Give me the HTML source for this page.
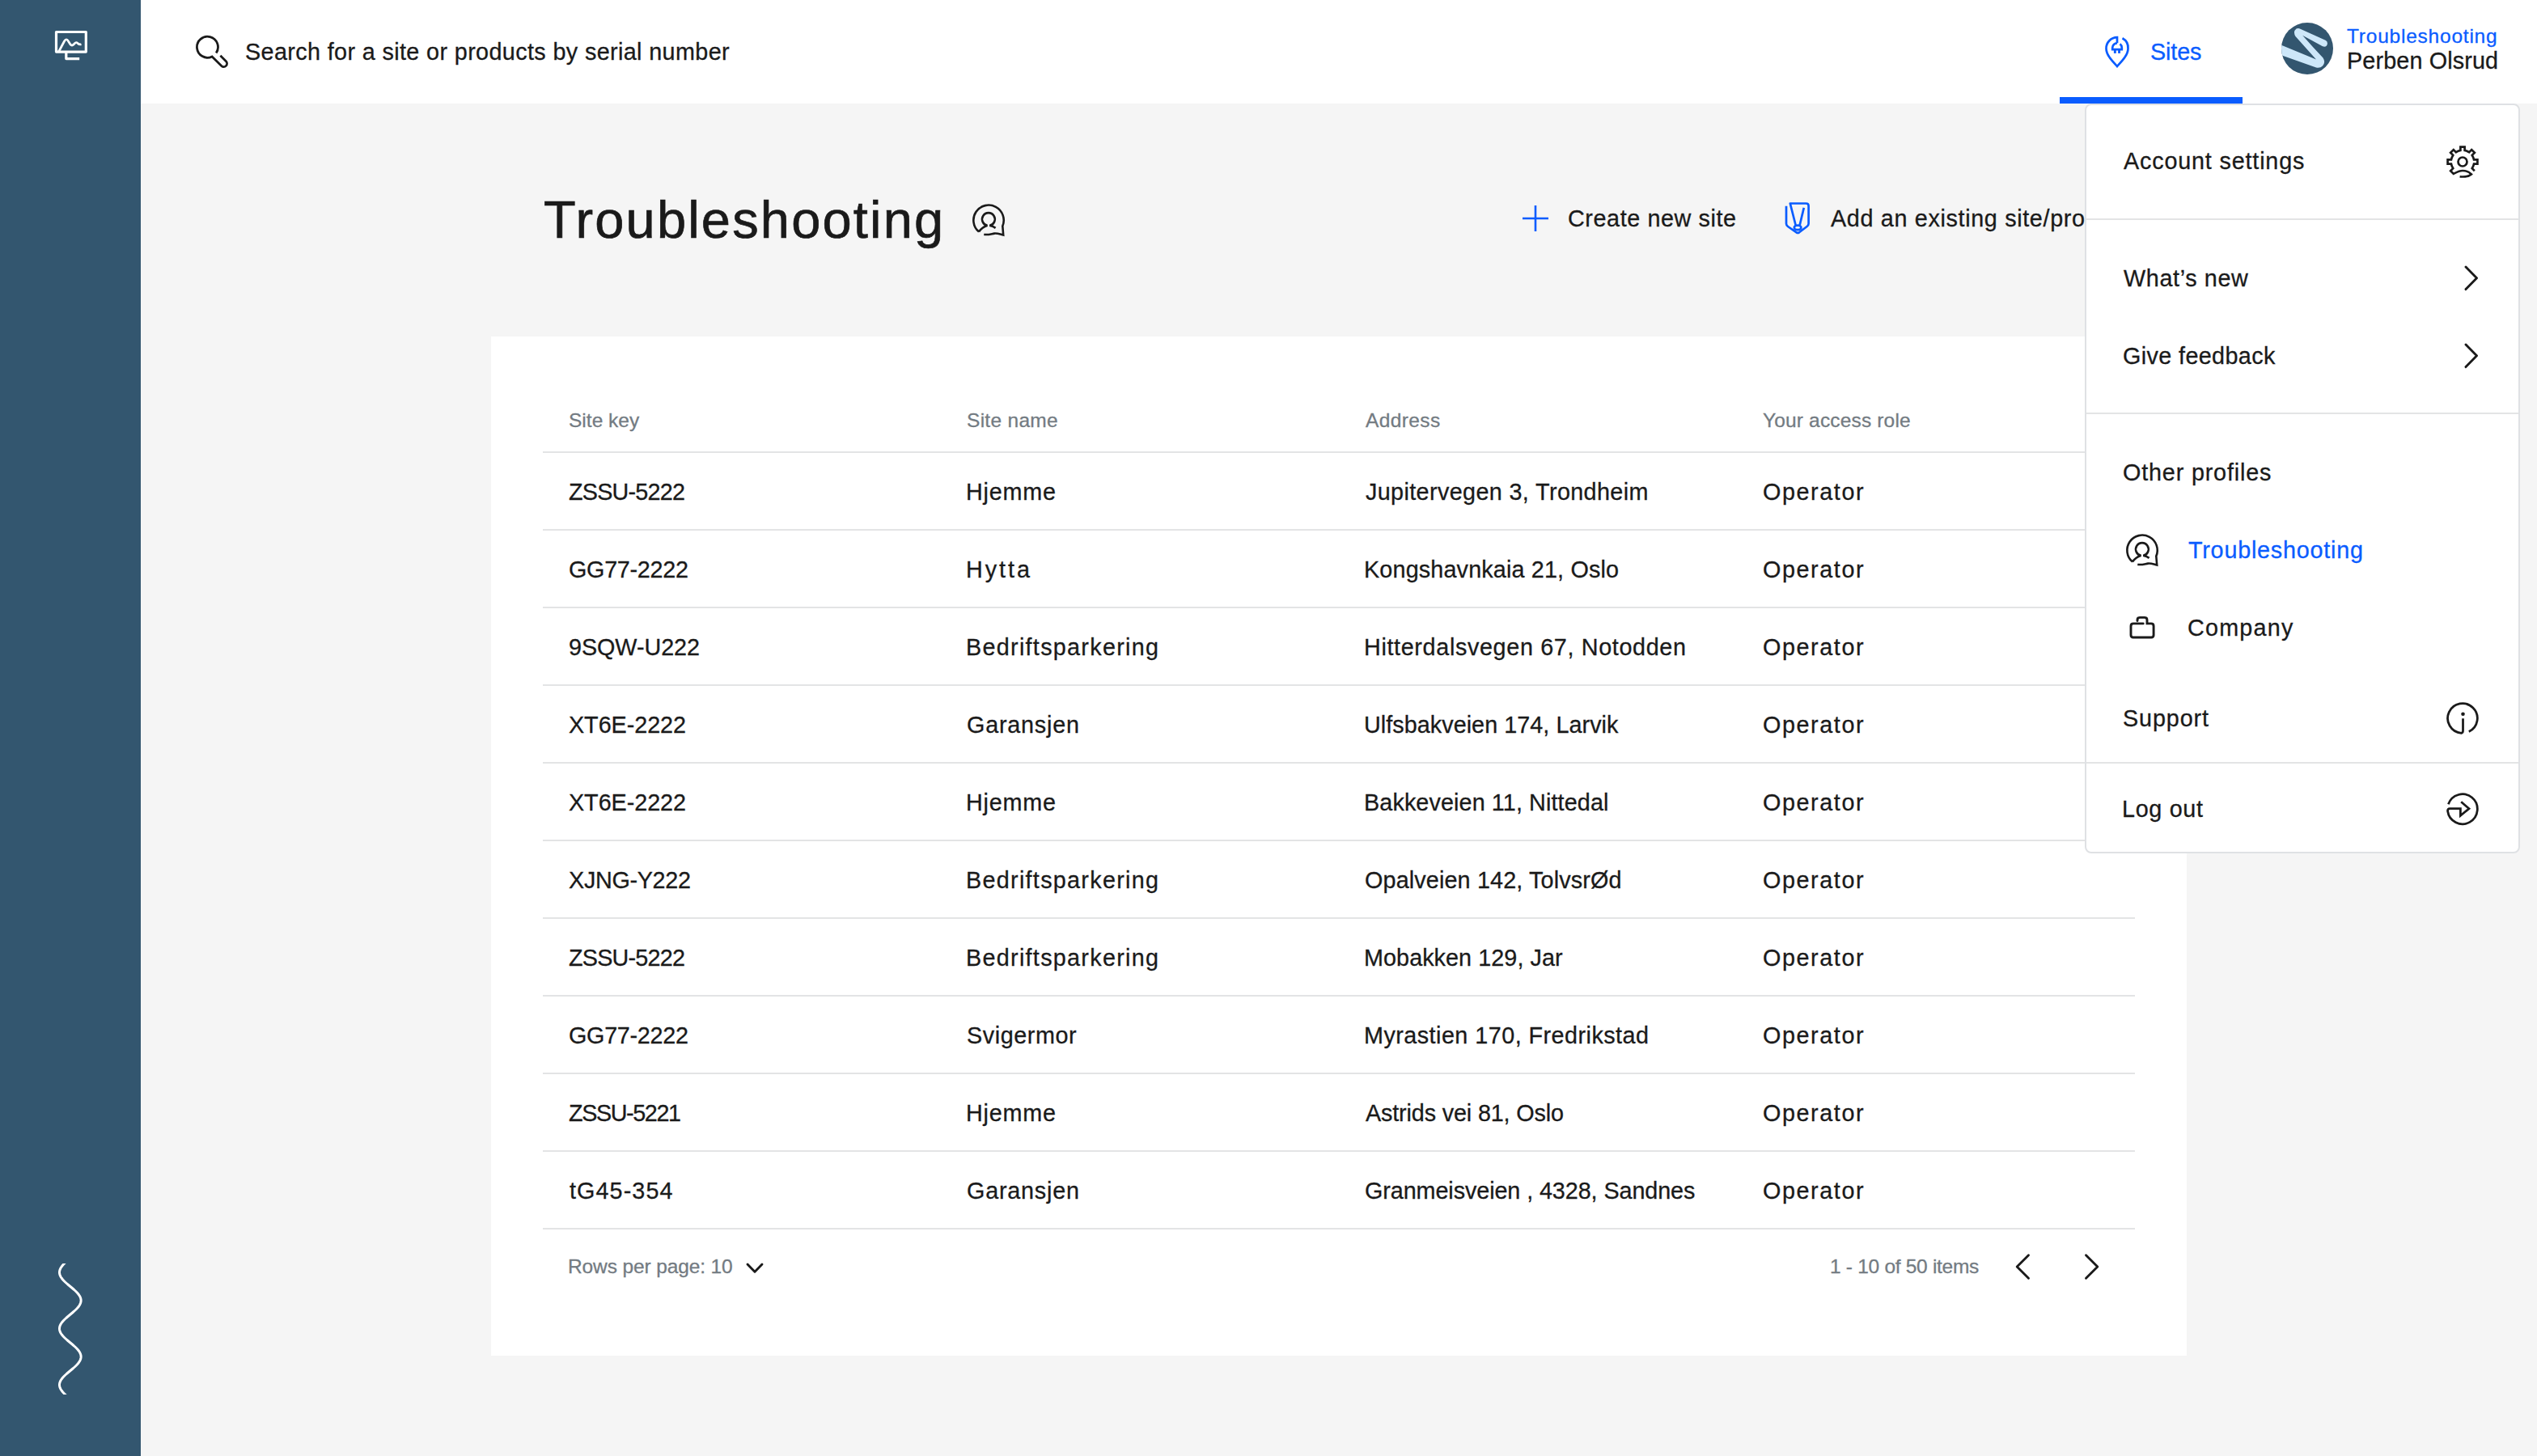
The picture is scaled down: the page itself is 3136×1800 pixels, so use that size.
<!DOCTYPE html>
<html><head><meta charset="utf-8"><title>Troubleshooting</title>
<style>
html,body{margin:0;padding:0}
body{width:3136px;height:1800px;overflow:hidden;background:#f5f5f5;position:relative;font-family:"Liberation Sans",sans-serif}
.t{position:absolute;white-space:pre;line-height:1;font-family:"Liberation Sans",sans-serif;-webkit-text-stroke:0.3px currentColor}
.i{position:absolute;overflow:visible}
#side{position:absolute;left:0;top:0;width:174px;height:1800px;background:#33566f}
#hdr{position:absolute;left:174px;top:0;width:2962px;height:128px;background:#fff}
#tab{position:absolute;left:2546px;top:120px;width:226px;height:8px;background:#0a5cff}
#card{position:absolute;left:607px;top:416px;width:2096px;height:1260px;background:#fff}
.ln{position:absolute;left:671px;width:1968px;height:2px;background:#e3e4e5}
#dd{position:absolute;left:2577px;top:128px;width:534px;height:923px;background:#fff;border:2px solid #dfe1e4;border-radius:8px;z-index:5}
#ddl{position:absolute;left:0;top:0;z-index:6}
.dsep{position:absolute;left:2579px;width:534px;height:2px;background:#e3e4e5}
@media (max-width:2000px){html{zoom:0.5}}
</style></head><body>
<div id="side"></div>
<div id="hdr"></div>
<div id="tab"></div>
<div id="card"></div>
<div class="ln" style="top:558px"></div><div class="ln" style="top:654px"></div><div class="ln" style="top:750px"></div><div class="ln" style="top:846px"></div><div class="ln" style="top:942px"></div><div class="ln" style="top:1038px"></div><div class="ln" style="top:1134px"></div><div class="ln" style="top:1230px"></div><div class="ln" style="top:1326px"></div><div class="ln" style="top:1422px"></div><div class="ln" style="top:1518px"></div>
<div class="t" id="t0" style="left:303.00px;top:49.86px;font-size:28.75px;letter-spacing:0.376px;color:#1a1a1a">Search for a site or products by serial number</div>
<div class="t" id="t1" style="left:2658.00px;top:49.66px;font-size:28.75px;letter-spacing:-0.135px;color:#0a5cff">Sites</div>
<div class="t" id="t2" style="left:2901.00px;top:33.26px;font-size:24.50px;letter-spacing:0.774px;color:#0a5cff">Troubleshooting</div>
<div class="t" id="t3" style="left:2901.00px;top:60.66px;font-size:28.75px;letter-spacing:0.135px;color:#1a1a1a">Perben Olsrud</div>
<div class="t" id="t4" style="left:672.00px;top:238.98px;font-size:65.00px;letter-spacing:2.173px;color:#1a1a1a;-webkit-text-stroke:0.7px currentColor">Troubleshooting</div>
<div class="t" id="t5" style="left:1938.00px;top:255.66px;font-size:28.75px;letter-spacing:0.589px;color:#1a1a1a">Create new site</div>
<div class="t" id="t6" style="left:2263.00px;top:255.66px;font-size:28.75px;letter-spacing:0.660px;color:#1a1a1a">Add an existing site/product</div>
<div class="t" id="t7" style="left:703.00px;top:508.26px;font-size:24.50px;letter-spacing:0.014px;color:#737b82">Site key</div>
<div class="t" id="t8" style="left:1195.00px;top:508.26px;font-size:24.50px;letter-spacing:0.289px;color:#737b82">Site name</div>
<div class="t" id="t9" style="left:1688.00px;top:508.26px;font-size:24.50px;letter-spacing:0.395px;color:#737b82">Address</div>
<div class="t" id="t10" style="left:2179.00px;top:508.26px;font-size:24.50px;letter-spacing:0.160px;color:#737b82">Your access role</div>
<div class="t" id="t11" style="left:703.00px;top:593.66px;font-size:28.75px;letter-spacing:-0.777px;color:#1a1a1a">ZSSU-5222</div>
<div class="t" id="t12" style="left:1194.00px;top:593.66px;font-size:28.75px;letter-spacing:0.793px;color:#1a1a1a">Hjemme</div>
<div class="t" id="t13" style="left:1688.00px;top:593.66px;font-size:28.75px;letter-spacing:0.376px;color:#1a1a1a">Jupitervegen 3, Trondheim</div>
<div class="t" id="t14" style="left:2179.00px;top:593.66px;font-size:28.75px;letter-spacing:1.588px;color:#1a1a1a">Operator</div>
<div class="t" id="t15" style="left:703.00px;top:689.66px;font-size:28.75px;letter-spacing:-0.281px;color:#1a1a1a">GG77-2222</div>
<div class="t" id="t16" style="left:1194.00px;top:689.66px;font-size:28.75px;letter-spacing:2.972px;color:#1a1a1a">Hytta</div>
<div class="t" id="t17" style="left:1686.00px;top:689.66px;font-size:28.75px;letter-spacing:0.159px;color:#1a1a1a">Kongshavnkaia 21, Oslo</div>
<div class="t" id="t18" style="left:2179.00px;top:689.66px;font-size:28.75px;letter-spacing:1.588px;color:#1a1a1a">Operator</div>
<div class="t" id="t19" style="left:703.00px;top:785.66px;font-size:28.75px;letter-spacing:-0.057px;color:#1a1a1a">9SQW-U222</div>
<div class="t" id="t20" style="left:1194.00px;top:785.66px;font-size:28.75px;letter-spacing:1.292px;color:#1a1a1a">Bedriftsparkering</div>
<div class="t" id="t21" style="left:1686.00px;top:785.66px;font-size:28.75px;letter-spacing:0.652px;color:#1a1a1a">Hitterdalsvegen 67, Notodden</div>
<div class="t" id="t22" style="left:2179.00px;top:785.66px;font-size:28.75px;letter-spacing:1.588px;color:#1a1a1a">Operator</div>
<div class="t" id="t23" style="left:703.00px;top:881.66px;font-size:28.75px;letter-spacing:-0.056px;color:#1a1a1a">XT6E-2222</div>
<div class="t" id="t24" style="left:1195.00px;top:881.66px;font-size:28.75px;letter-spacing:0.793px;color:#1a1a1a">Garansjen</div>
<div class="t" id="t25" style="left:1686.00px;top:881.66px;font-size:28.75px;letter-spacing:0.050px;color:#1a1a1a">Ulfsbakveien 174, Larvik</div>
<div class="t" id="t26" style="left:2179.00px;top:881.66px;font-size:28.75px;letter-spacing:1.588px;color:#1a1a1a">Operator</div>
<div class="t" id="t27" style="left:703.00px;top:977.66px;font-size:28.75px;letter-spacing:-0.056px;color:#1a1a1a">XT6E-2222</div>
<div class="t" id="t28" style="left:1194.00px;top:977.66px;font-size:28.75px;letter-spacing:0.793px;color:#1a1a1a">Hjemme</div>
<div class="t" id="t29" style="left:1686.00px;top:977.66px;font-size:28.75px;letter-spacing:0.112px;color:#1a1a1a">Bakkeveien 11, Nittedal</div>
<div class="t" id="t30" style="left:2179.00px;top:977.66px;font-size:28.75px;letter-spacing:1.588px;color:#1a1a1a">Operator</div>
<div class="t" id="t31" style="left:703.00px;top:1073.66px;font-size:28.75px;letter-spacing:-0.301px;color:#1a1a1a">XJNG-Y222</div>
<div class="t" id="t32" style="left:1194.00px;top:1073.66px;font-size:28.75px;letter-spacing:1.292px;color:#1a1a1a">Bedriftsparkering</div>
<div class="t" id="t33" style="left:1687.00px;top:1073.66px;font-size:28.75px;letter-spacing:0.144px;color:#1a1a1a">Opalveien 142, TolvsrØd</div>
<div class="t" id="t34" style="left:2179.00px;top:1073.66px;font-size:28.75px;letter-spacing:1.588px;color:#1a1a1a">Operator</div>
<div class="t" id="t35" style="left:703.00px;top:1169.66px;font-size:28.75px;letter-spacing:-0.777px;color:#1a1a1a">ZSSU-5222</div>
<div class="t" id="t36" style="left:1194.00px;top:1169.66px;font-size:28.75px;letter-spacing:1.292px;color:#1a1a1a">Bedriftsparkering</div>
<div class="t" id="t37" style="left:1686.00px;top:1169.66px;font-size:28.75px;letter-spacing:0.066px;color:#1a1a1a">Mobakken 129, Jar</div>
<div class="t" id="t38" style="left:2179.00px;top:1169.66px;font-size:28.75px;letter-spacing:1.588px;color:#1a1a1a">Operator</div>
<div class="t" id="t39" style="left:703.00px;top:1265.66px;font-size:28.75px;letter-spacing:-0.281px;color:#1a1a1a">GG77-2222</div>
<div class="t" id="t40" style="left:1195.00px;top:1265.66px;font-size:28.75px;letter-spacing:0.571px;color:#1a1a1a">Svigermor</div>
<div class="t" id="t41" style="left:1686.00px;top:1265.66px;font-size:28.75px;letter-spacing:0.466px;color:#1a1a1a">Myrastien 170, Fredrikstad</div>
<div class="t" id="t42" style="left:2179.00px;top:1265.66px;font-size:28.75px;letter-spacing:1.588px;color:#1a1a1a">Operator</div>
<div class="t" id="t43" style="left:703.00px;top:1361.66px;font-size:28.75px;letter-spacing:-1.402px;color:#1a1a1a">ZSSU-5221</div>
<div class="t" id="t44" style="left:1194.00px;top:1361.66px;font-size:28.75px;letter-spacing:0.793px;color:#1a1a1a">Hjemme</div>
<div class="t" id="t45" style="left:1688.00px;top:1361.66px;font-size:28.75px;letter-spacing:-0.141px;color:#1a1a1a">Astrids vei 81, Oslo</div>
<div class="t" id="t46" style="left:2179.00px;top:1361.66px;font-size:28.75px;letter-spacing:1.588px;color:#1a1a1a">Operator</div>
<div class="t" id="t47" style="left:704.00px;top:1457.66px;font-size:28.75px;letter-spacing:1.088px;color:#1a1a1a">tG45-354</div>
<div class="t" id="t48" style="left:1195.00px;top:1457.66px;font-size:28.75px;letter-spacing:0.793px;color:#1a1a1a">Garansjen</div>
<div class="t" id="t49" style="left:1687.00px;top:1457.66px;font-size:28.75px;letter-spacing:-0.084px;color:#1a1a1a">Granmeisveien , 4328, Sandnes</div>
<div class="t" id="t50" style="left:2179.00px;top:1457.66px;font-size:28.75px;letter-spacing:1.588px;color:#1a1a1a">Operator</div>
<div class="t" id="t51" style="left:702.00px;top:1553.76px;font-size:24.50px;letter-spacing:-0.127px;color:#737b82">Rows per page: 10</div>
<div class="t" id="t52" style="left:2262.00px;top:1553.76px;font-size:24.50px;letter-spacing:-0.296px;color:#737b82">1 - 10 of 50 items</div>
<svg class="i" style="left:60px;top:30px" width="56" height="52" viewBox="60 30 56 52"><g fill="none" stroke="#fff" stroke-width="3.2" stroke-linejoin="round"><path d="M69.5 64.1 V39.5 H106.3 V64.1 Z"/><path stroke-width="2.7" d="M72.5 64 L79.5 51 Q82 46.5 84.5 51 L87 55 Q89 57 91 55 L92.5 53.5 Q94 51.5 96 53.5 Q98 55.5 100.5 54.8"/><path d="M81.8 64.1 V72.6 H98.2"/></g></svg>
<svg class="i" style="left:60px;top:1550px" width="50" height="190" viewBox="60 1550 50 190"><defs><clipPath id="wc"><rect x="60" y="1562" width="50" height="162"/></clipPath></defs><path clip-path="url(#wc)" d="M87.55 1555.00 L86.35 1556.00 L85.15 1557.00 L83.97 1558.00 L82.80 1559.00 L81.68 1560.00 L80.59 1561.00 L79.55 1562.00 L78.57 1563.00 L77.66 1564.00 L76.83 1565.00 L76.08 1566.00 L75.41 1567.00 L74.84 1568.00 L74.36 1569.00 L73.99 1570.00 L73.72 1571.00 L73.55 1572.00 L73.50 1573.00 L73.55 1574.00 L73.72 1575.00 L73.99 1576.00 L74.36 1577.00 L74.84 1578.00 L75.41 1579.00 L76.08 1580.00 L76.83 1581.00 L77.66 1582.00 L78.57 1583.00 L79.55 1584.00 L80.59 1585.00 L81.68 1586.00 L82.80 1587.00 L83.97 1588.00 L85.15 1589.00 L86.35 1590.00 L87.55 1591.00 L88.75 1592.00 L89.93 1593.00 L91.08 1594.00 L92.20 1595.00 L93.28 1596.00 L94.30 1597.00 L95.26 1598.00 L96.15 1599.00 L96.97 1600.00 L97.70 1601.00 L98.34 1602.00 L98.89 1603.00 L99.34 1604.00 L99.69 1605.00 L99.93 1606.00 L100.07 1607.00 L100.10 1608.00 L100.02 1609.00 L99.83 1610.00 L99.53 1611.00 L99.13 1612.00 L98.63 1613.00 L98.03 1614.00 L97.34 1615.00 L96.57 1616.00 L95.71 1617.00 L94.79 1618.00 L93.79 1619.00 L92.74 1620.00 L91.65 1621.00 L90.51 1622.00 L89.34 1623.00 L88.15 1624.00 L86.95 1625.00 L85.75 1626.00 L84.56 1627.00 L83.38 1628.00 L82.24 1629.00 L81.13 1630.00 L80.06 1631.00 L79.06 1632.00 L78.11 1633.00 L77.24 1634.00 L76.44 1635.00 L75.73 1636.00 L75.11 1637.00 L74.59 1638.00 L74.16 1639.00 L73.84 1640.00 L73.62 1641.00 L73.51 1642.00 L73.51 1643.00 L73.62 1644.00 L73.84 1645.00 L74.16 1646.00 L74.59 1647.00 L75.11 1648.00 L75.73 1649.00 L76.44 1650.00 L77.24 1651.00 L78.11 1652.00 L79.06 1653.00 L80.06 1654.00 L81.13 1655.00 L82.24 1656.00 L83.38 1657.00 L84.56 1658.00 L85.75 1659.00 L86.95 1660.00 L88.15 1661.00 L89.34 1662.00 L90.51 1663.00 L91.65 1664.00 L92.74 1665.00 L93.79 1666.00 L94.79 1667.00 L95.71 1668.00 L96.57 1669.00 L97.34 1670.00 L98.03 1671.00 L98.63 1672.00 L99.13 1673.00 L99.53 1674.00 L99.83 1675.00 L100.02 1676.00 L100.10 1677.00 L100.07 1678.00 L99.93 1679.00 L99.69 1680.00 L99.34 1681.00 L98.89 1682.00 L98.34 1683.00 L97.70 1684.00 L96.97 1685.00 L96.15 1686.00 L95.26 1687.00 L94.30 1688.00 L93.28 1689.00 L92.20 1690.00 L91.08 1691.00 L89.93 1692.00 L88.75 1693.00 L87.55 1694.00 L86.35 1695.00 L85.15 1696.00 L83.97 1697.00 L82.80 1698.00 L81.68 1699.00 L80.59 1700.00 L79.55 1701.00 L78.57 1702.00 L77.66 1703.00 L76.83 1704.00 L76.08 1705.00 L75.41 1706.00 L74.84 1707.00 L74.36 1708.00 L73.99 1709.00 L73.72 1710.00 L73.55 1711.00 L73.50 1712.00 L73.55 1713.00 L73.72 1714.00 L73.99 1715.00 L74.36 1716.00 L74.84 1717.00 L75.41 1718.00 L76.08 1719.00 L76.83 1720.00 L77.66 1721.00 L78.57 1722.00 L79.55 1723.00 L80.59 1724.00 L81.68 1725.00 L82.80 1726.00 L83.97 1727.00 L85.15 1728.00 L86.35 1729.00 L87.55 1730.00 L88.75 1731.00" fill="none" stroke="#fff" stroke-width="3"/></svg>
<svg class="i" style="left:236px;top:38px" width="52" height="52" viewBox="236 38 52 52"><g transform="translate(242 44)"><path d="M25.2 21.5 A13 13 0 1 0 20.1 25.9 L31.8 37.4 A3.9 3.9 0 0 0 37.4 31.8 L30.4 24.7" fill="none" stroke="#1a1a1a" stroke-width="2.75"/></g></svg>
<svg class="i" style="left:2594px;top:38px" width="46" height="52" viewBox="2594 38 46 52"><g transform="translate(2594 38)"><g fill="none" stroke="#0a5cff" stroke-width="2.7"><path d="M29.5 9.3 A13.6 13.6 0 0 1 36.5 22 C36.5 30 29 37.5 23 44 C17 37.5 9.5 30 9.5 22 A13.6 13.6 0 0 1 23 8.2 V15.3"/><path d="M23 15.3 A5.8 5.8 0 0 0 17.2 21 V23.2 H28.8 V21 A5.8 5.8 0 0 0 26.5 16.3"/></g><rect x="18.9" y="23" width="2.9" height="4.9" fill="#0a5cff"/><rect x="24.1" y="23" width="2.9" height="4.9" fill="#0a5cff"/></g></svg>
<svg class="i" style="left:2816px;top:24px" width="72" height="72" viewBox="2816 24 72 72"><defs><clipPath id="avc"><circle cx="2852" cy="60" r="32"/></clipPath></defs><circle cx="2852" cy="60" r="32" fill="#33566f"/><g clip-path="url(#avc)"><g transform="translate(2816 24)"><path d="M-2 29.2 L47 49.5 L21.5 21 Q18 15 22.5 11.5 Q25 10.5 28 12 L58.5 25.8 Q62.5 28 60 32.5 Q58 34.5 55 33.3 L30.2 19.8 L43.6 34.65 L55.5 47.5 Q59 53 55 57.5 Q52 60.5 47 59.5 L-2 42 Z" fill="#cde7f9"/></g></g></svg>
<svg class="i" style="left:1196px;top:244px" width="52" height="54" viewBox="1196 244 52 54"><g transform="translate(1196 244)"><g fill="none" stroke="#1a1a1a" stroke-width="2.6"><path d="M14 42.6 A18.7 18.7 0 1 1 43.3 35.5 L44.2 46.5 C40 45.5 36.5 44.2 33.2 44.6 C29 45.3 24.5 46.8 20.3 45.8"/><path d="M14 42.6 C16.5 39 20 36.2 24.5 34.8 A7.9 7.9 0 1 1 27.3 34.8 C30 35.5 32.5 36.3 34.6 37.9"/></g></g></svg>
<svg class="i" style="left:1878px;top:250px" width="40" height="40" viewBox="1878 250 40 40"><path d="M1898 254 V286 M1882 270 H1914" stroke="#0a5cff" stroke-width="2.6" fill="none"/></svg>
<svg class="i" style="left:2198px;top:244px" width="48" height="52" viewBox="2198 244 48 52"><g transform="translate(2198 244)"><g fill="none" stroke="#0a5cff" stroke-width="2.7" stroke-linejoin="round"><path d="M10 10.7 V32.6 Q10 34.6 12 36 L22.6 43.3 Q24.3 44.5 26 43.3 L35.6 36 Q37.6 34.6 37.6 32.6 V10.5 Q37.6 7.5 34.6 7.5 H14.8 L21.8 35"/><path d="M31.8 12.9 L26.5 35"/><ellipse cx="24.1" cy="37.4" rx="4.3" ry="2.7"/></g></g></svg>
<svg class="i" style="left:918px;top:1556px" width="30" height="24" viewBox="918 1556 30 24"><path d="M924 1563 L933 1572.2 L942 1563" fill="none" stroke="#1a1a1a" stroke-width="2.9" stroke-linecap="round" stroke-linejoin="round"/></svg>
<svg class="i" style="left:2486px;top:1546px" width="30" height="40" viewBox="2486 1546 30 40"><path d="M2507.5 1551.8 L2493.2 1566 L2507.5 1580.2" fill="none" stroke="#1a1a1a" stroke-width="2.9" stroke-linecap="round" stroke-linejoin="round"/></svg>
<svg class="i" style="left:2572px;top:1546px" width="30" height="40" viewBox="2572 1546 30 40"><path d="M2578.5 1551.8 L2592.8 1566 L2578.5 1580.2" fill="none" stroke="#1a1a1a" stroke-width="2.9" stroke-linecap="round" stroke-linejoin="round"/></svg>
<div id="dd"></div>
<div id="ddl">
<div class="dsep" style="top:270px"></div>
<div class="dsep" style="top:510px"></div>
<div class="dsep" style="top:942px"></div>
<div class="t" id="t53" style="left:2625.00px;top:185.16px;font-size:28.75px;letter-spacing:0.828px;color:#1a1a1a">Account settings</div>
<div class="t" id="t54" style="left:2625.00px;top:329.66px;font-size:28.75px;letter-spacing:0.632px;color:#1a1a1a">What’s new</div>
<div class="t" id="t55" style="left:2624.00px;top:425.66px;font-size:28.75px;letter-spacing:0.382px;color:#1a1a1a">Give feedback</div>
<div class="t" id="t56" style="left:2624.00px;top:570.16px;font-size:28.75px;letter-spacing:0.831px;color:#1a1a1a">Other profiles</div>
<div class="t" id="t57" style="left:2624.00px;top:874.26px;font-size:28.75px;letter-spacing:0.882px;color:#1a1a1a">Support</div>
<div class="t" id="t58" style="left:2623.00px;top:986.26px;font-size:28.75px;letter-spacing:0.678px;color:#1a1a1a">Log out</div>
<div class="t" id="t59" style="left:2705.00px;top:665.96px;font-size:28.75px;letter-spacing:0.777px;color:#0a5cff">Troubleshooting</div>
<div class="t" id="t60" style="left:2704.00px;top:762.06px;font-size:28.75px;letter-spacing:1.222px;color:#1a1a1a">Company</div>
<svg class="i" style="left:3016px;top:172px" width="52" height="54" viewBox="3016 172 52 54"><g transform="translate(3016 172)"><g fill="none" stroke="#1a1a1a" stroke-width="2.7" stroke-linejoin="miter"><path d="M42.86 39.18 L39.78 36.10 A14.30 14.30 0 0 0 42.06 30.60 L46.42 30.60 L46.42 25.40 L42.06 25.40 A14.30 14.30 0 0 0 39.78 19.90 L42.86 16.82 L39.18 13.14 L36.10 16.22 A14.30 14.30 0 0 0 30.60 13.94 L30.60 9.58 L25.40 9.58 L25.40 13.94 A14.30 14.30 0 0 0 19.90 16.22 L16.82 13.14 L13.14 16.82 L16.22 19.90 A14.30 14.30 0 0 0 13.94 25.40 L9.58 25.40 L9.58 30.60 L13.94 30.60 A14.30 14.30 0 0 0 16.22 36.10 L13.14 39.18 L16.82 42.86 C20.5 41 24 39 28 39 C32.5 39 36.5 41 38.9 43.5 C36 46 30 46.8 24.6 46.3"/><circle cx="28" cy="28" r="5.5"/></g></g></svg>
<svg class="i" style="left:3040px;top:322px" width="30" height="44" viewBox="3040 322 30 44"><path d="M3048 330.0 L3061.5 343.8 L3048 357.6" fill="none" stroke="#1a1a1a" stroke-width="2.9" stroke-linecap="round" stroke-linejoin="round"/></svg>
<svg class="i" style="left:3040px;top:418px" width="30" height="44" viewBox="3040 418 30 44"><path d="M3048 426.0 L3061.5 439.8 L3048 453.6" fill="none" stroke="#1a1a1a" stroke-width="2.9" stroke-linecap="round" stroke-linejoin="round"/></svg>
<svg class="i" style="left:2622px;top:652px" width="52" height="54" viewBox="2622 652 52 54"><g transform="translate(2622 652)"><g fill="none" stroke="#1a1a1a" stroke-width="2.6"><path d="M14 42.6 A18.7 18.7 0 1 1 43.3 35.5 L44.2 46.5 C40 45.5 36.5 44.2 33.2 44.6 C29 45.3 24.5 46.8 20.3 45.8"/><path d="M14 42.6 C16.5 39 20 36.2 24.5 34.8 A7.9 7.9 0 1 1 27.3 34.8 C30 35.5 32.5 36.3 34.6 37.9"/></g></g></svg>
<svg class="i" style="left:2620px;top:750px" width="56" height="50" viewBox="2620 750 56 50"><g transform="translate(2620 750)"><path d="M29.2 20.9 H17 Q14 20.9 14 23.9 V35 Q14 38 17 38 H39.1 Q42.1 38 42.1 35 V23.9 Q42.1 20.9 39.1 20.9 H34 V16.4 Q34 13.4 31 13.4 H25 Q22 13.4 22 16.4 V17.6" fill="none" stroke="#1a1a1a" stroke-width="2.9" stroke-linecap="round"/></g></svg>
<svg class="i" style="left:3016px;top:860px" width="56" height="56" viewBox="3016 860 56 56"><g transform="translate(3016 860)"><path d="M35.8 44.6 A18.35 18.35 0 1 0 26.5 46.3 Q28.5 45.8 28.5 43.5 V28.3" fill="none" stroke="#1a1a1a" stroke-width="2.75"/><circle cx="28.5" cy="22.7" r="2.3" fill="#1a1a1a"/></g></svg>
<svg class="i" style="left:3016px;top:972px" width="56" height="56" viewBox="3016 972 56 56"><g transform="translate(3016 972)"><path d="M10.4 22.3 A18.45 18.45 0 1 1 9.6 30.8 Q9.3 27.7 12.3 27.7 H25.4 V36.3 L36 27.7 L26.2 19.2" fill="none" stroke="#1a1a1a" stroke-width="2.75" stroke-linejoin="miter"/></g></svg>
</div>
</body></html>
